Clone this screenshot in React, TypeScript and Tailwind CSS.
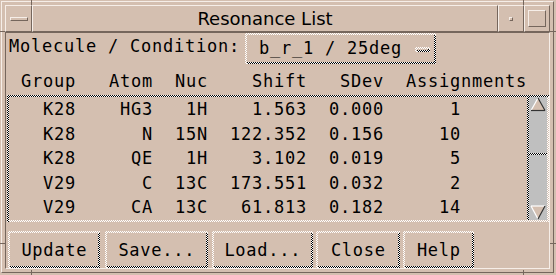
import React from "react";

const DARK =
  "bg-[image:repeating-conic-gradient(#000_0_25%,#fff_0_50%)] bg-[length:2px_2px]";
const LIGHT =
  "bg-[image:repeating-conic-gradient(#fff_0_25%,#d4bfb0_0_50%)] bg-[length:2px_2px]";
const RAISED1 =
  "border border-t-[#f6eee8] border-l-[#f6eee8] border-b-[#75665c] border-r-[#75665c]";
const SUNKEN1 =
  "border border-t-[#75665c] border-l-[#75665c] border-b-[#f6eee8] border-r-[#f6eee8]";
const MONO = "font-['DejaVu_Sans_Mono',monospace] text-[17px] tracking-[0.765px] leading-[20px]";

function Raised({ className, children }: { className?: string; children?: React.ReactNode }) {
  return (
    <div className={`${LIGHT} pt-[2px] pl-[2px] ${className ?? ""}`}>
      <div className={`${DARK} pb-[2px] pr-[2px] w-full h-full`}>
        <div className="bg-[#d4bfb0] w-full h-full">{children}</div>
      </div>
    </div>
  );
}

function Button({ label, className }: { label: string; className: string }) {
  return (
    <Raised className={`h-[37px] ${className}`}>
      <div className="w-full h-full flex items-center justify-center">
        <span className="pl-[0.765px]">{label}</span>
      </div>
    </Raised>
  );
}

const rows = [
  ["K28", "HG3", "1H", "1.563", "0.000", "1"],
  ["K28", "N", "15N", "122.352", "0.156", "10"],
  ["K28", "QE", "1H", "3.102", "0.019", "5"],
  ["V29", "C", "13C", "173.551", "0.032", "2"],
  ["V29", "CA", "13C", "61.813", "0.182", "14"],
];

function Tick({ className }: { className: string }) {
  return <div className={`absolute bg-[#75665c] ${className}`} />;
}

export default function App() {
  return (
    <div className={`relative w-[556px] h-[275px] bg-[#d4bfb0] pl-[1px] pt-[1px] text-black ${MONO}`}>
      <div className={`w-[553px] h-[272px] p-[3px] flex flex-col ${RAISED1}`}>
        {/* title bar */}
        <div className="h-[27px] flex shrink-0">
          <div className={`w-[27px] flex items-center justify-center ${RAISED1}`}>
            <div className={`w-[18px] h-[4px] mt-[1px] ${RAISED1}`} />
          </div>
          <div
            className={`flex-1 flex items-center justify-center font-['DejaVu_Sans',sans-serif] text-[18px] tracking-normal ${RAISED1}`}
          >
            Resonance List
          </div>
          <div className={`w-[26px] flex items-center justify-center ${RAISED1}`}>
            <div className={`w-[4px] h-[4px] ${RAISED1}`} />
          </div>
          <div className={`w-[26px] flex items-center justify-center ${RAISED1}`}>
            <div className={`w-[18px] h-[17px] ${RAISED1}`} />
          </div>
        </div>
        {/* client */}
        <div className={`flex-1 flex flex-col ${SUNKEN1}`}>
          <div className="h-[31px] flex items-start shrink-0">
            <span className="ml-[3px] mt-[3px] whitespace-pre">Molecule / Condition:</span>
            <Raised className="ml-[5px] w-[191px] h-[31px]">
              <div className="flex items-start pl-[12px]">
                <span className="mt-[3px] whitespace-pre">b_r_1 / 25deg</span>
                <div className="ml-[13px] mt-[12px]">
                  <Raised className="w-[15px] h-[5px]" />
                </div>
              </div>
            </Raised>
          </div>
          <div className="mt-[7px] flex whitespace-pre shrink-0">
            <div className="w-[70px] text-right">Group</div>
            <div className="w-[77px] text-right">Atom</div>
            <div className="w-[55px] text-right">Nuc</div>
            <div className="w-[99px] text-right">Shift</div>
            <div className="w-[77px] text-right">SDev</div>
            <div className="ml-[22px]">Assignments</div>
          </div>
          {/* list */}
          <div className={`mt-[4px] ml-[1px] w-[542px] h-[127px] shrink-0 ${DARK} pt-[2px] pl-[2px]`}>
            <div className={`w-full h-full ${LIGHT} pb-[2px] pr-[2px]`}>
              <div className="w-full h-full bg-[#d4bfb0] flex">
                <div className="flex-1 flex flex-col leading-[24.5px]">
                  {rows.map((r, i) => (
                    <div key={i} className="flex whitespace-pre">
                      <div className="w-[67px] text-right">{r[0]}</div>
                      <div className="w-[77px] text-right">{r[1]}</div>
                      <div className="w-[55px] text-right">{r[2]}</div>
                      <div className="w-[99px] text-right">{r[3]}</div>
                      <div className="w-[77px] text-right">{r[4]}</div>
                      <div className="w-[77px] text-right">{r[5]}</div>
                    </div>
                  ))}
                </div>
                <div className={`w-[20px] h-full ${DARK} pl-[2px]`}>
                  <div className="w-full h-full bg-[#bfbfbf] flex flex-col">
                    <svg width="18" height="15" viewBox="0 0 18 15" className="block shrink-0">
                      <polygon points="9,1 16,13.5 2,13.5" fill="#d4bfb0" />
                      <line x1="9" y1="1" x2="2" y2="13.5" stroke="#fff" strokeWidth="1.2" />
                      <line x1="9" y1="1" x2="16" y2="13.5" stroke="#333" strokeWidth="1.2" />
                      <line x1="2" y1="13.5" x2="16" y2="13.5" stroke="#333" strokeWidth="1.2" />
                    </svg>
                    <div className="h-[41px] shrink-0" />
                    <div className={`h-[2px] shrink-0 ${DARK}`} />
                    <div className="flex-1" />
                    <svg width="18" height="15" viewBox="0 0 18 15" className="block shrink-0">
                      <polygon points="2,1 16,1 9,14" fill="#d4bfb0" />
                      <line x1="2" y1="1" x2="16" y2="1" stroke="#fff" strokeWidth="1.2" />
                      <line x1="2" y1="1" x2="9" y2="14" stroke="#fff" strokeWidth="1.2" />
                      <line x1="16" y1="1" x2="9" y2="14" stroke="#333" strokeWidth="1.2" />
                    </svg>
                  </div>
                </div>
              </div>
            </div>
          </div>
          {/* buttons */}
          <div className="mt-[9px] flex shrink-0">
            <Button label="Update" className="ml-[2px] w-[92px]" />
            <Button label="Save..." className="ml-[5px] w-[103px]" />
            <Button label="Load..." className="ml-[4px] w-[101px]" />
            <Button label="Close" className="ml-[3px] w-[84px]" />
            <Button label="Help" className="ml-[3px] w-[71px]" />
          </div>
        </div>
      </div>
      {/* frame resize-corner ticks */}
      <Tick className="left-[31px] top-0 w-[1px] h-[5px]" />
      <Tick className="left-[523px] top-0 w-[1px] h-[5px]" />
      <Tick className="left-[31px] top-[270px] w-[1px] h-[5px]" />
      <Tick className="left-[523px] top-[270px] w-[1px] h-[5px]" />
      <Tick className="left-0 top-[31px] w-[5px] h-[1px]" />
      <Tick className="left-0 top-[243px] w-[5px] h-[1px]" />
      <Tick className="left-[550px] top-[31px] w-[6px] h-[1px]" />
      <Tick className="left-[550px] top-[243px] w-[6px] h-[1px]" />
    </div>
  );
}
